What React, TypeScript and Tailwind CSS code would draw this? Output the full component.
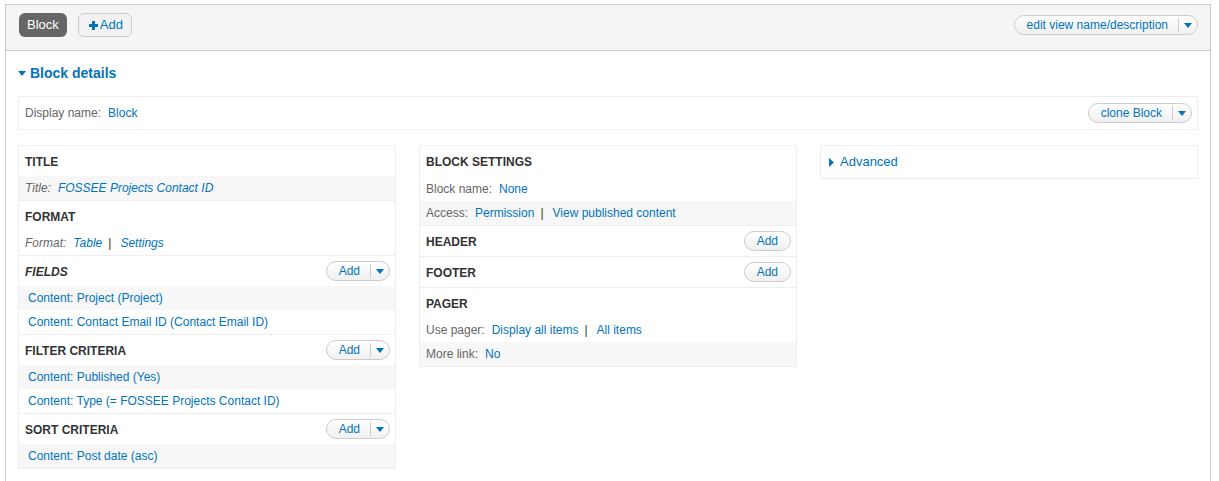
import React from "react"

const font = "font-['Liberation_Sans',Arial,sans-serif]"

function CaretDown({ className = "" }: { className?: string }) {
  return (
    <svg width="8" height="5" viewBox="0 0 8 5" className={className}>
      <path d="M0 0 L8 0 L4 5 Z" fill="#0074bd" />
    </svg>
  )
}

function Pill({ label, dropdown = true }: { label: string; dropdown?: boolean }) {
  return (
    <div className="inline-flex items-center h-[20px] rounded-full border border-[#ccc] bg-gradient-to-b from-white to-[#f0f0f0] text-[12px] text-[#0074bd] shadow-[inset_0_1px_0_#fff]">
      <span className={dropdown ? "pl-[12px] pr-[10px] leading-none" : "px-[12px] leading-none"}>{label}</span>
      {dropdown && (
        <span className="flex items-center h-[14px] border-l border-[#ccc] px-[5px]">
          <CaretDown />
        </span>
      )}
    </div>
  )
}

function SectionHead({ title, italic = false, add, h = "h-[30px]" }: { title: string; italic?: boolean; add?: "drop" | "plain"; h?: string }) {
  return (
    <div className={`flex items-center justify-between ${h} pl-[6px] pr-[5px]`}>
      <span className={`pt-[2px] text-[12px] font-bold text-[#333] ${italic ? "italic" : ""}`}>{title}</span>
      {add === "drop" && <Pill label="Add" />}
      {add === "plain" && <Pill label="Add" dropdown={false} />}
    </div>
  )
}

function Row({ grey = false, indent = false, h = "h-[24px]", children }: { grey?: boolean; indent?: boolean; h?: string; children: React.ReactNode }) {
  return (
    <div className={`flex items-center ${h} text-[12px] ${indent ? "pl-[9px]" : "pl-[6px]"} ${grey ? "bg-[#f7f7f7]" : ""}`}>
      {children}
    </div>
  )
}

const Label = ({ children, italic = false }: { children: React.ReactNode; italic?: boolean }) => (
  <span className={`text-[#666] mr-[7px] ${italic ? "italic" : ""}`}>{children}</span>
)
const Lnk = ({ children, italic = false }: { children: React.ReactNode; italic?: boolean }) => (
  <a className={`text-[#0074bd] ${italic ? "italic" : ""}`}>{children}</a>
)
const Pipe = () => <span className="text-[#333] ml-[6px] mr-[9px]">|</span>

export default function App() {
  return (
    <div className={`${font} bg-white min-h-[481px] pt-[4px] pl-[5px] pr-[8px] overflow-hidden`}>
      <div className="border-x border-t border-[#ccc]">
        {/* top bar */}
        <div className="flex items-start justify-between h-[46px] bg-[#f5f5f5] border-b border-[#ccc] pt-[8px] pl-[13px] pr-[12px]">
          <div className="flex items-center gap-[11px]">
            <span className="flex items-center h-[24px] px-[8px] rounded-[6px] bg-[#666] text-white text-[13px]">Block</span>
            <span className="flex items-center h-[24px] pl-[10px] pr-[8px] rounded-[6px] bg-[#f2f2f2] border border-[#ccc] text-[13px] text-[#0074bd]">
              <svg width="9" height="9" viewBox="0 0 9 9" className="mr-[2px]">
                <path d="M3 0 H6 V3 H9 V6 H6 V9 H3 V6 H0 V3 H3 Z" fill="#0074bd" />
              </svg>
              Add
            </span>
          </div>
          <div className="-mt-[1px]">
            <Pill label="edit view name/description" />
          </div>
        </div>

        {/* content */}
        <div className="px-[12px] pb-[24px]">
          <div className="flex items-center h-[20px] mt-[12px] text-[14px] font-bold text-[#0074bd]">
            <CaretDown className="mr-[4px] mt-[1px]" />
            Block details
          </div>

          <div className="flex items-center justify-between h-[34px] mt-[13px] border border-[#eee] pl-[6px] pr-[5px] text-[12px]">
            <div>
              <Label>Display name:</Label>
              <Lnk>Block</Lnk>
            </div>
            <Pill label="clone Block" />
          </div>

          <div className="grid grid-cols-3 gap-[23px] items-start mt-[15px]">
            {/* left column */}
            <div className="border border-[#eee]">
              <SectionHead title="TITLE" />
              <Row grey>
                <Label italic>Title:</Label>
                <Lnk italic>FOSSEE Projects Contact ID</Lnk>
              </Row>
              <div className="border-t border-[#eee]">
                <SectionHead title="FORMAT" />
                <Row>
                  <Label italic>Format:</Label>
                  <Lnk italic>Table</Lnk>
                  <Pipe />
                  <Lnk italic>Settings</Lnk>
                </Row>
              </div>
              <div className="border-t border-[#eee]">
                <SectionHead title="FIELDS" italic add="drop" />
                <Row grey indent><Lnk>Content: Project (Project)</Lnk></Row>
                <Row indent><Lnk>Content: Contact Email ID (Contact Email ID)</Lnk></Row>
              </div>
              <div className="border-t border-[#eee]">
                <SectionHead title="FILTER CRITERIA" add="drop" />
                <Row grey indent><Lnk>Content: Published (Yes)</Lnk></Row>
                <Row indent><Lnk>Content: Type (= FOSSEE Projects Contact ID)</Lnk></Row>
              </div>
              <div className="border-t border-[#eee]">
                <SectionHead title="SORT CRITERIA" add="drop" />
                <Row grey indent><Lnk>Content: Post date (asc)</Lnk></Row>
              </div>
            </div>

            {/* middle column */}
            <div className="border border-[#eee]">
              <SectionHead title="BLOCK SETTINGS" />
              <Row h="h-[25px]">
                <Label>Block name:</Label>
                <Lnk>None</Lnk>
              </Row>
              <Row grey>
                <Label>Access:</Label>
                <Lnk>Permission</Lnk>
                <Pipe />
                <Lnk>View published content</Lnk>
              </Row>
              <div className="border-t border-[#eee]">
                <SectionHead title="HEADER" add="plain" />
              </div>
              <div className="border-t border-[#eee]">
                <SectionHead title="FOOTER" add="plain" />
              </div>
              <div className="border-t border-[#eee]">
                <SectionHead title="PAGER" />
                <Row>
                  <Label>Use pager:</Label>
                  <Lnk>Display all items</Lnk>
                  <Pipe />
                  <Lnk>All items</Lnk>
                </Row>
                <Row grey>
                  <Label>More link:</Label>
                  <Lnk>No</Lnk>
                </Row>
              </div>
            </div>

            {/* right column */}
            <div className="flex items-center h-[34px] border border-[#eee] pl-[8px] text-[13px] text-[#0074bd]">
              <svg width="5" height="9" viewBox="0 0 5 9" className="mr-[6px]">
                <path d="M0 0 L5 4.5 L0 9 Z" fill="#0074bd" />
              </svg>
              Advanced
            </div>
          </div>
        </div>
      </div>
    </div>
  )
}
